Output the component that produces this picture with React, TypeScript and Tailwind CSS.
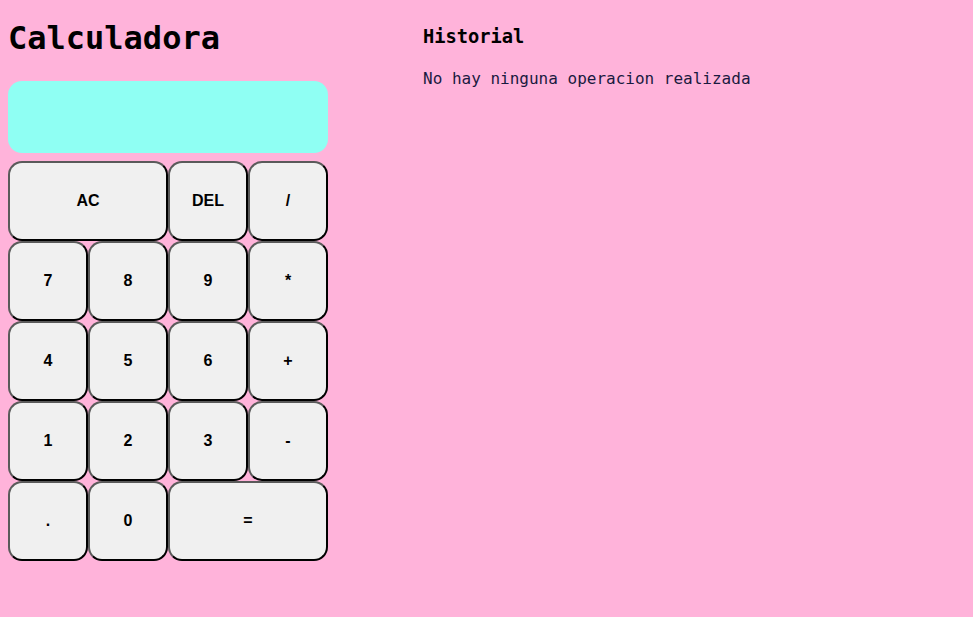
import React from "react";

const btn =
  "h-[80px] rounded-[14px] bg-[#f0f0f0] border-2 border-t-[#5a5a5a] border-l-[#5a5a5a] border-r-black border-b-black text-black text-[16px] font-bold flex items-center justify-center font-['Liberation_Sans',Arial,sans-serif]";

export default function App() {
  const rows: { label: string; span?: boolean }[] = [
    { label: "AC", span: true },
    { label: "DEL" },
    { label: "/" },
    { label: "7" },
    { label: "8" },
    { label: "9" },
    { label: "*" },
    { label: "4" },
    { label: "5" },
    { label: "6" },
    { label: "+" },
    { label: "1" },
    { label: "2" },
    { label: "3" },
    { label: "-" },
    { label: "." },
    { label: "0" },
    { label: "=", span: true },
  ];
  return (
    <div className="min-h-[617px] w-full bg-[#ffb3da] p-2 flex font-['DejaVu_Sans_Mono',monospace]">
      <div className="w-[320px] flex flex-col">
        <h1 className="text-[32px] font-bold text-black leading-[37px] mt-[12px] mb-[24px]">Calculadora</h1>
        <div className="h-[72px] rounded-[14px] bg-[#8ffff3]" />
        <div className="mt-2 grid grid-cols-4 w-[320px]">
          {rows.map((b, i) => (
            <button key={i} className={btn + (b.span ? " col-span-2" : "")}>
              {b.label}
            </button>
          ))}
        </div>
      </div>
      <div className="ml-[95px] pt-[18px]">
        <h3 className="text-[18.72px] font-bold text-black leading-[22px]">Historial</h3>
        <p className="mt-[22px] text-[16px] text-[#1a1a40] leading-[18px]">No hay ninguna operacion realizada</p>
      </div>
    </div>
  );
}
